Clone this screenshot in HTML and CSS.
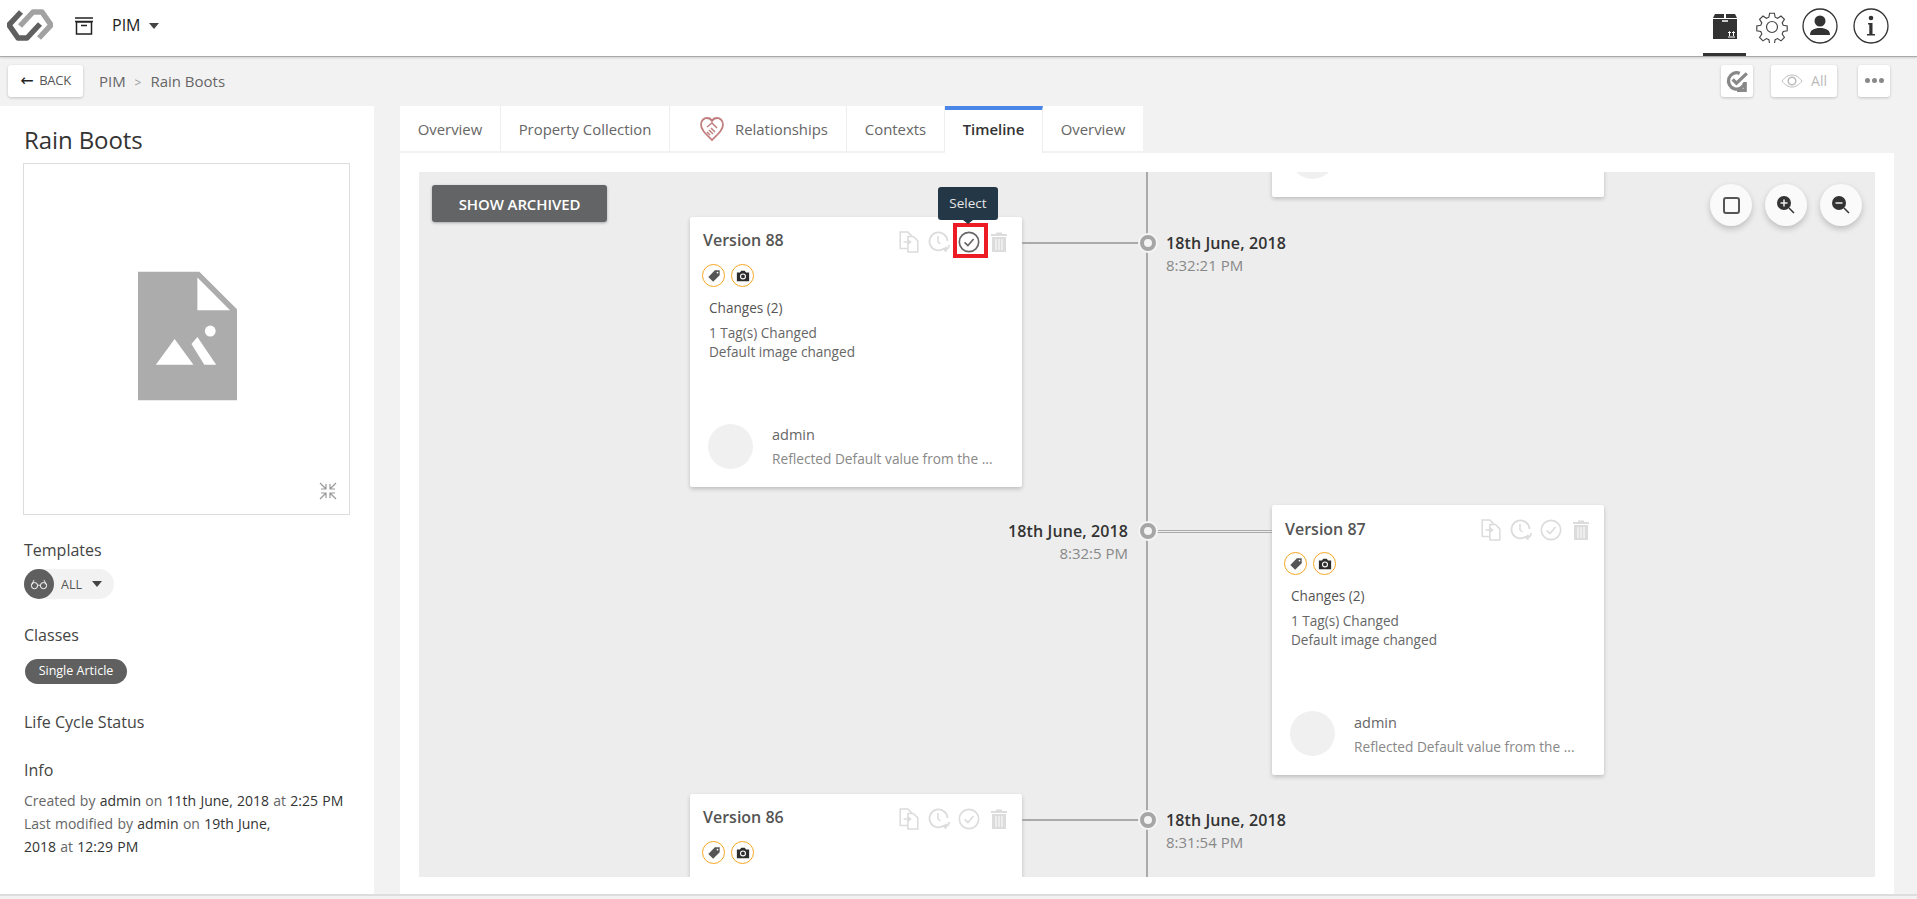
FILE: index.html
```html
<!DOCTYPE html>
<html lang="en">
<head>
  <meta charset="UTF-8" />
  <title>PIM - Rain Boots</title>
  <link rel="stylesheet" href="styles.css">
</head>
<body>

  <!-- shared icons -->
  <svg class="sprite" width="0" height="0">
    <symbol id="i-copy" viewBox="0 0 20 20">
      <path d="M2 1h7l3 3v2h-2v10H2z" fill="none" stroke="currentColor" stroke-width="1.4"/>
      <path d="M9 5h5l4 4v10H9z" fill="#fff" stroke="currentColor" stroke-width="1.4"/>
      <path d="M5 10h6M9 8l2.500 2L9 12" fill="none" stroke="currentColor" stroke-width="1.300"/>
    </symbol>
    <symbol id="i-clock" viewBox="0 0 22 22">
      <path d="M16 17.500A9 9 0 1 1 19.500 10" fill="none" stroke="currentColor" stroke-width="1.800"/>
      <path d="M10 5v6l2.500 2" fill="none" stroke="currentColor" stroke-width="1.500"/>
      <path d="M21 14c0 3-2 4.500-4.500 4.500M18.500 16l-2.500 2.500 2.500 2" fill="none" stroke="currentColor" stroke-width="1.800"/>
    </symbol>
    <symbol id="i-check" viewBox="0 0 20 20">
      <circle cx="10" cy="10" r="8.800" fill="none" stroke="currentColor" stroke-width="1.500"/>
      <path d="M6 10.300l3 3 5.200-6" fill="none" stroke="currentColor" stroke-width="1.500"/>
    </symbol>
    <symbol id="i-trash" viewBox="0 0 16 20">
      <path d="M5 2V.5h6V2h5v2H0V2zM1 5h14v15H1z" fill="currentColor"/>
      <path d="M5 7v11M8 7v11M11 7v11" stroke="#fff" stroke-width="1"/>
    </symbol>
    <symbol id="i-tag" viewBox="0 0 16 16">
      <path d="M9 1.500h5.500V7L7 14.500 1.500 9z" fill="#555"/>
      <circle cx="12" cy="4" r="1" fill="#fff"/>
    </symbol>
    <symbol id="i-camera" viewBox="0 0 16 16">
      <path d="M1 4h3.500L6 2h4l1.500 2H15v10H1z" fill="#2d2d2d"/>
      <circle cx="8" cy="8.500" r="2.800" fill="none" stroke="#fff" stroke-width="1.300"/>
    </symbol>
  </svg>

  <header class="topbar">
    <div class="topbar-left">
      <svg class="logo" viewBox="0 0 46 32" width="46" height="32">
        <path d="M13 17L26 3h9l9 13-12 13" fill="none" stroke="#a2a2a2" stroke-width="5.500" stroke-linejoin="round"/>
        <path d="M14 3L2 16l9 13h9l13-14" fill="none" stroke="#5f5f5f" stroke-width="5.500" stroke-linejoin="round"/>
      </svg>
      <svg class="archive" viewBox="0 0 18 18" width="18" height="18">
        <path d="M0 1h18M1.500 5h15v12h-15zM0 4.500h18M6 8.500h6" fill="none" stroke="#222" stroke-width="1.500"/>
      </svg>
      <span class="app-name">PIM</span>
      <span class="caret"></span>
    </div>
    <div class="topbar-right">
      <div class="top-tab">
        <svg viewBox="0 0 26 28" width="26" height="28">
          <path d="M1 6l2-4h9v4zM14 2h9l2 4H14z" fill="#333"/>
          <path d="M1 7h24v20H1z" fill="#333"/>
          <path d="M10 9h6" stroke="#fff" stroke-width="1.500"/>
          <path d="M16 25h7M17.500 24v-4M21.500 24v-4M16 21l1.500-1.500L19 21M20 21l1.500-1.500L23 21" fill="none" stroke="#fff" stroke-width="1"/>
        </svg>
      </div>
      <svg class="top-icon" viewBox="0 0 32 32" width="32" height="32">
        <path d="M13.500 1.500h5l.8 4.200 2.600 1.100 3.600-2.400 3.600 3.600-2.400 3.600 1.100 2.600 4.200.8v5l-4.200.8-1.100 2.600 2.400 3.600-3.600 3.600-3.600-2.400-2.600 1.100-.8 4.200h-5l-.8-4.200-2.600-1.100-3.600 2.400-3.600-3.600 2.400-3.600-1.100-2.600-4.200-.8v-5l4.200-.8 1.100-2.600-2.400-3.600 3.600-3.600 3.600 2.400 2.600-1.100z" transform="translate(.8 .8) scale(.95)" fill="none" stroke="#444" stroke-width="1.200"/>
        <circle cx="16" cy="16" r="5.500" fill="none" stroke="#444" stroke-width="1.200"/>
      </svg>
      <svg class="top-icon" viewBox="0 0 36 36" width="36" height="36">
        <circle cx="18" cy="18" r="17" fill="none" stroke="#333" stroke-width="1.300"/>
        <circle cx="18" cy="13" r="5.500" fill="#333"/>
        <path d="M8 27c0-5 4-7 10-7s10 2 10 7z" fill="#333"/>
      </svg>
      <svg class="top-icon" viewBox="0 0 36 36" width="36" height="36">
        <circle cx="18" cy="18" r="17" fill="none" stroke="#333" stroke-width="1.300"/>
        <circle cx="18" cy="10" r="2.300" fill="#333"/>
        <path d="M15 15h4.500v11H22v1.500h-8V26h2.300v-9.500H15z" fill="#333"/>
      </svg>
    </div>
  </header>

  <div class="subbar">
    <button class="back-btn" type="button"><span class="back-arrow">&#8592;</span>BACK</button>
    <div class="breadcrumb">PIM <span class="crumb-sep">&gt;</span> Rain Boots</div>
    <div class="subbar-right">
      <div class="tool-btn">
        <svg viewBox="0 0 22 22" width="24" height="24">
          <path d="M18 12.500A7.500 7.500 0 1 1 13.500 4" fill="none" stroke="#888" stroke-width="3"/>
          <path d="M7 9.500l3.500 3.500L20 4" fill="none" stroke="#888" stroke-width="3"/>
          <path d="M18.500 12v7.500H11" fill="none" stroke="#888" stroke-width="3"/>
        </svg>
      </div>
      <div class="tool-btn all-btn">
        <svg viewBox="0 0 22 14" width="22" height="14">
          <path d="M1 7c3-4 6.500-6 10-6s7 2 10 6c-3 4-6.500 6-10 6S4 11 1 7z" fill="none" stroke="#bbb" stroke-width="1"/>
          <circle cx="11" cy="7" r="3.800" fill="none" stroke="#bbb" stroke-width="1.500"/>
        </svg>
        <span>All</span>
      </div>
      <div class="tool-btn more-btn"><i></i><i></i><i></i></div>
    </div>
  </div>

  <main class="layout">
    <aside class="sidebar">
      <h1 class="item-title">Rain Boots</h1>
      <div class="image-box">
        <svg class="no-image" viewBox="0 0 100 130" width="99" height="130">
          <path d="M0 0h62l38 38v92H0z" fill="#acacac"/>
          <path d="M60 6v33h33z" fill="#fff"/>
          <circle cx="73" cy="60" r="5.500" fill="#fff"/>
          <path d="M18 94l19-26 19 26zM54 73l6-7 19 28H67z" fill="#fff"/>
        </svg>
        <svg class="shrink" viewBox="0 0 18 18" width="18" height="18">
          <path d="M1 1l6 6M7 2v5H2M17 1l-6 6M11 2v5h5M1 17l6-6M7 16v-5H2M17 17l-6-6M11 16v-5h5" fill="none" stroke="#999" stroke-width="1.200"/>
        </svg>
      </div>

      <h3 class="side-label templates-label">Templates</h3>
      <div class="template-pill">
        <span class="glasses">
          <svg viewBox="0 0 22 14" width="22" height="14">
            <circle cx="5.500" cy="9" r="3.800" fill="none" stroke="#fff" stroke-width="1.200"/>
            <circle cx="16.500" cy="9" r="3.800" fill="none" stroke="#fff" stroke-width="1.200"/>
            <path d="M9 8.500h4M2 8l3-6M20 8l-3-6" fill="none" stroke="#fff" stroke-width="1"/>
          </svg>
        </span>
        <span class="pill-text">ALL</span>
        <span class="caret small"></span>
      </div>

      <h3 class="side-label classes-label">Classes</h3>
      <span class="class-chip">Single Article</span>

      <h3 class="side-label life-label">Life Cycle Status</h3>

      <h3 class="side-label info-label">Info</h3>
      <p class="info-text">
        Created by <b>admin</b> on <b>11th June, 2018</b> at <b>2:25 PM</b><br>
        Last modified by <b>admin</b> on <b>19th June,</b><br>
        <b>2018</b> at <b>12:29 PM</b>
      </p>
    </aside>

    <section class="content">
      <nav class="tabs">
        <a class="tab tab-overview">Overview</a>
        <a class="tab tab-property">Property Collection</a>
        <a class="tab tab-rel">
          <svg viewBox="0 0 24 24" width="24" height="24">
            <path d="M12 23C6 17 1 13 1 7.500 1 3.500 4 1 7 1c2 0 4 1 5 3 1-2 3-3 5-3 3 0 6 2.500 6 6.500C23 13 18 17 12 23z" fill="none" stroke="#c07f7f" stroke-width="1.800"/>
            <path d="M7 10l5-4 5 5M9 13l4 4M11 11l4 4M7 15l3 3" fill="none" stroke="#c07f7f" stroke-width="1.500"/>
          </svg>
          Relationships
        </a>
        <a class="tab tab-contexts">Contexts</a>
        <a class="tab tab-timeline active">Timeline</a>
        <a class="tab tab-overview2">Overview</a>
      </nav>

      <div class="canvas">
        <div class="spine"></div>

        <button class="archived-btn" type="button">SHOW ARCHIVED</button>

        <div class="zoom-tools">
          <div class="round-btn"><span class="square-ico"></span></div>
          <div class="round-btn">
            <svg viewBox="0 0 20 20" width="20" height="20">
              <circle cx="8" cy="8" r="7" fill="#333"/>
              <path d="M8 4.500v7M4.500 8h7" stroke="#eee" stroke-width="1.500"/>
              <path d="M13 13l5 5" stroke="#333" stroke-width="1.500"/>
            </svg>
          </div>
          <div class="round-btn">
            <svg viewBox="0 0 20 20" width="20" height="20">
              <circle cx="8" cy="8" r="7" fill="#333"/>
              <path d="M4.500 8h7" stroke="#eee" stroke-width="1.500"/>
              <path d="M13 13l5 5" stroke="#333" stroke-width="1.500"/>
            </svg>
          </div>
        </div>

        <!-- card scrolled off the top -->
        <article class="card card-right card-stub">
          <div class="card-user"><span class="avatar"></span></div>
        </article>

        <article class="card card-left card-88">
          <div class="card-head">
            <h4>Version 88</h4>
            <div class="card-icons">
              <svg class="act"><use href="#i-copy"/></svg>
              <svg class="act"><use href="#i-clock"/></svg>
              <span class="act-selected">
                <svg class="act on"><use href="#i-check"/></svg>
                <span class="tooltip">Select</span>
              </span>
              <svg class="act act-trash"><use href="#i-trash"/></svg>
            </div>
          </div>
          <div class="badges">
            <span class="badge"><svg><use href="#i-tag"/></svg></span>
            <span class="badge"><svg><use href="#i-camera"/></svg></span>
          </div>
          <div class="changes">
            <div class="changes-title">Changes (2)</div>
            <div>1 Tag(s) Changed</div>
            <div>Default image changed</div>
          </div>
          <div class="card-user">
            <span class="avatar"></span>
            <div class="user-text">
              <div class="user-name">admin</div>
              <div class="user-note">Reflected Default value from the ...</div>
            </div>
          </div>
        </article>

        <article class="card card-right card-87">
          <div class="card-head">
            <h4>Version 87</h4>
            <div class="card-icons">
              <svg class="act"><use href="#i-copy"/></svg>
              <svg class="act"><use href="#i-clock"/></svg>
              <svg class="act"><use href="#i-check"/></svg>
              <svg class="act act-trash"><use href="#i-trash"/></svg>
            </div>
          </div>
          <div class="badges">
            <span class="badge"><svg><use href="#i-tag"/></svg></span>
            <span class="badge"><svg><use href="#i-camera"/></svg></span>
          </div>
          <div class="changes">
            <div class="changes-title">Changes (2)</div>
            <div>1 Tag(s) Changed</div>
            <div>Default image changed</div>
          </div>
          <div class="card-user">
            <span class="avatar"></span>
            <div class="user-text">
              <div class="user-name">admin</div>
              <div class="user-note">Reflected Default value from the ...</div>
            </div>
          </div>
        </article>

        <article class="card card-left card-86">
          <div class="card-head">
            <h4>Version 86</h4>
            <div class="card-icons">
              <svg class="act"><use href="#i-copy"/></svg>
              <svg class="act"><use href="#i-clock"/></svg>
              <svg class="act"><use href="#i-check"/></svg>
              <svg class="act act-trash"><use href="#i-trash"/></svg>
            </div>
          </div>
          <div class="badges">
            <span class="badge"><svg><use href="#i-tag"/></svg></span>
            <span class="badge"><svg><use href="#i-camera"/></svg></span>
          </div>
        </article>

        <div class="link link-left row-88"></div>
        <div class="link link-double row-87"></div>
        <div class="link link-left row-86"></div>

        <span class="node row-88"></span>
        <span class="node row-87"></span>
        <span class="node row-86"></span>

        <div class="stamp stamp-right stamp-88">
          <div class="stamp-date">18th June, 2018</div>
          <div class="stamp-time">8:32:21 PM</div>
        </div>
        <div class="stamp stamp-left stamp-87">
          <div class="stamp-date">18th June, 2018</div>
          <div class="stamp-time">8:32:5 PM</div>
        </div>
        <div class="stamp stamp-right stamp-86">
          <div class="stamp-date">18th June, 2018</div>
          <div class="stamp-time">8:31:54 PM</div>
        </div>
      </div>
    </section>
  </main>

</body>
</html>
```

FILE: styles.css
```css
* {
  box-sizing: border-box;
}
html, body {
  margin: 0;
  height: 899px;
  overflow: hidden;
}
body {
  font-family: "Open Sans", sans-serif;
  background: #f2f2f2;
  color: #555;
}
.sprite {
  position: absolute;
}

/* top bar */
.topbar {
  height: 57px;
  background: #fff;
  border-bottom: 1px solid #a9a9a9;
  display: flex;
  justify-content: space-between;
  box-shadow: 0 1px 2px rgba(0,0,0,0.15);
  position: relative;
}
.topbar-left {
  display: flex;
  align-items: center;
  padding-left: 7px;
}
.logo {
  margin-top: -6px;
}
.archive {
  margin-left: 22px;
  margin-top: -5px;
}
.app-name {
  margin-left: 19px;
  font-size: 16px;
  color: #222;
  margin-top: -6px;
}
.caret {
  width: 0;
  height: 0;
  border-left: 5px solid transparent;
  border-right: 5px solid transparent;
  border-top: 6px solid #444;
  margin-left: 9px;
  margin-top: -5px;
}
.topbar-right {
  display: flex;
  align-items: flex-start;
  padding-right: 28px;
}
.top-tab {
  width: 43px;
  height: 56px;
  border-bottom: 3px solid #333;
  display: flex;
  justify-content: center;
  padding-top: 12px;
}
.top-icon {
  margin-left: 15px;
  margin-top: 8px;
}
.top-icon:nth-child(2) {
  margin-left: 10px;
  margin-top: 11px;
}
.top-icon:nth-child(3) {
  margin-left: 14px;
}

/* breadcrumb row */
.subbar {
  height: 49px;
  display: flex;
  align-items: center;
  padding: 0 27px 2px 8px;
}
.back-btn {
  width: 75px;
  height: 32px;
  background: #fff;
  border: 0;
  border-radius: 3px;
  box-shadow: 0 1px 3px rgba(0,0,0,0.2);
  font-family: inherit;
  font-size: 13px;
  color: #555;
  padding: 0;
  letter-spacing: -0.3px;
}
.back-arrow {
  font-size: 16px;
  color: #222;
  font-family: "DejaVu Sans", sans-serif;
  vertical-align: -1px;
  margin-right: 6px;
}
.breadcrumb {
  margin-left: 16px;
  font-size: 15px;
  color: #666;
}
.crumb-sep {
  color: #999;
  font-size: 12px;
  margin: 0 5px;
}
.subbar-right {
  margin-left: auto;
  display: flex;
  gap: 18px;
}
.tool-btn {
  width: 32px;
  height: 32px;
  background: #fff;
  border-radius: 3px;
  box-shadow: 0 1px 3px rgba(0,0,0,0.2);
  display: flex;
  align-items: center;
  justify-content: center;
}
.all-btn {
  width: 66px;
  gap: 8px;
  font-size: 14px;
  color: #bbb;
  margin-right: 3px;
}
.more-btn {
  gap: 2px;
}
.more-btn i {
  width: 5px;
  height: 5px;
  border-radius: 50%;
  background: #888;
}

/* main columns */
.layout {
  display: flex;
  gap: 26px;
  height: 790px;
  border-bottom: 2px solid #ddd;
}
.sidebar {
  width: 374px;
  background: #fff;
  padding: 18px 0 0 24px;
}
.item-title {
  margin: 0;
  font-size: 24px;
  font-weight: 400;
  line-height: 32px;
  color: #333;
  letter-spacing: -0.1px;
}
.image-box {
  width: 327px;
  height: 352px;
  margin: 7px 0 0 -1px;
  border: 1px solid #ddd;
  position: relative;
  display: flex;
  justify-content: center;
  padding-top: 107px;
}
.no-image {
  margin-left: 2px;
}
.shrink {
  position: absolute;
  right: 12px;
  bottom: 14px;
}
.side-label {
  margin: 0;
  font-size: 16px;
  font-weight: 400;
  line-height: 22px;
  color: #444;
}
.templates-label {
  margin-top: 24px;
}
.template-pill {
  width: 90px;
  height: 30px;
  margin-top: 8px;
  background: #f2f2f2;
  border-radius: 15px;
  display: flex;
  align-items: center;
}
.glasses {
  width: 30px;
  height: 30px;
  border-radius: 50%;
  background: #5f5f5f;
  display: flex;
  align-items: center;
  justify-content: center;
}
.glasses svg {
  width: 18px;
  height: 12px;
}
.pill-text {
  font-size: 12.500px;
  margin-left: 7px;
  color: #555;
}
.caret.small {
  margin-left: 10px;
  margin-top: 0;
}
.classes-label {
  margin-top: 25px;
}
.class-chip {
  display: inline-block;
  margin: 13px 0 0 1px;
  width: 102px;
  height: 25px;
  background: #606060;
  border-radius: 13px;
  color: #fff;
  font-size: 12.500px;
  line-height: 24px;
  text-align: center;
}
.life-label {
  margin-top: 27px;
}
.info-label {
  margin-top: 26px;
}
.info-text {
  margin: 9px 0 0;
  font-size: 14px;
  line-height: 22.800px;
  color: #666;
  word-spacing: 0.6px;
}
.info-text b {
  font-weight: 400;
  color: #333;
}

/* tabs */
.content {
  width: 1494px;
  background: #fff;
}
.tabs {
  display: flex;
  height: 47px;
  background: #fff;
  border-bottom: 2px solid #f2f2f2;
  position: relative;
}
.tabs::after {
  content: "";
  flex: 1;
  background: #f2f2f2;
  margin-bottom: -2px;
}
.tab {
  height: 46px;
  display: flex;
  align-items: center;
  justify-content: center;
  font-size: 14.900px;
  color: #666;
  border-right: 1px solid #eee;
}
.tab-overview {
  width: 101px;
}
.tab-overview2 {
  width: 100px;
  border-right: 0;
}
.tab-property {
  width: 169px;
}
.tab-rel {
  width: 177px;
  gap: 11px;
  padding-left: 12px;
}
.tab-contexts {
  width: 98px;
}
.tab-timeline {
  width: 98px;
}
.tab.active {
  height: 47px;
  font-weight: 600;
  color: #333;
  border-top: 4px solid #4a86e8;
  padding-bottom: 5px;
  background: #fff;
  position: relative;
  z-index: 1;
}

/* timeline canvas */
.canvas {
  position: relative;
  width: 1456px;
  height: 705px;
  margin: 19px 0 0 19px;
  background: #ededed;
  overflow: hidden;
}
.spine {
  position: absolute;
  left: 727px;
  top: 0;
  bottom: 0;
  width: 2px;
  background: #aaa;
}
.archived-btn {
  position: absolute;
  left: 13px;
  top: 13px;
  width: 175px;
  height: 37px;
  background: #636466;
  color: #fff;
  border: 0;
  border-radius: 3px;
  box-shadow: 0 1px 3px rgba(0,0,0,0.3);
  font-family: inherit;
  font-size: 15px;
  font-weight: 600;
  letter-spacing: -0.1px;
}
.zoom-tools {
  position: absolute;
  right: 13px;
  top: 12px;
  display: flex;
  gap: 13px;
}
.round-btn {
  width: 42px;
  height: 42px;
  border-radius: 50%;
  background: #fafafa;
  box-shadow: 0 3px 6px rgba(0,0,0,0.2);
  display: flex;
  align-items: center;
  justify-content: center;
}
.square-ico {
  width: 17px;
  height: 17px;
  border: 2px solid #555;
  border-radius: 3px;
}

/* version cards */
.card {
  position: absolute;
  width: 332px;
  height: 270px;
  background: #fff;
  border-radius: 2px;
  box-shadow: 0 2px 4px rgba(0,0,0,0.2);
  padding: 0 12px 0 13px;
  display: flex;
  flex-direction: column;
}
.card-left {
  left: 271px;
}
.card-right {
  left: 853px;
}
.card-stub {
  top: -245px;
}
.card-88 {
  top: 45px;
}
.card-87 {
  top: 333px;
}
.card-86 {
  top: 622px;
}
.card-head {
  height: 48px;
  display: flex;
  align-items: center;
  justify-content: space-between;
}
.card-head h4 {
  margin: -3px 0 0;
  font-size: 16px;
  font-weight: 600;
  color: #555;
}
.card-87 .card-head h4 {
  margin-top: -1px;
}
.card-icons {
  display: flex;
  align-items: center;
  gap: 8px;
  color: #dcdcdc;
  margin-top: 2px;
}
.act {
  width: 22px;
  height: 22px;
  display: block;
}
.act-trash {
  width: 16px;
  margin: 0 3px;
}
.act-selected {
  position: relative;
  display: block;
}
.act-selected::before {
  content: "";
  position: absolute;
  left: -5px;
  right: -8px;
  top: -8px;
  bottom: -5px;
  border: 4px solid #ed1c24;
}
.act.on {
  color: #666;
  position: relative;
}
.tooltip {
  position: absolute;
  left: -20px;
  top: -44px;
  width: 60px;
  height: 33px;
  background: #243746;
  border-radius: 3px;
  color: #e6e6e6;
  font-size: 13.500px;
  line-height: 33px;
  text-align: center;
}
.tooltip::after {
  content: "";
  position: absolute;
  left: 25px;
  top: 33px;
  border-left: 5px solid transparent;
  border-right: 5px solid transparent;
  border-top: 4px solid #243746;
}
.badges {
  display: flex;
  gap: 6px;
  margin: -1px 0 0 -1px;
}
.badge {
  width: 23px;
  height: 23px;
  border-radius: 50%;
  border: 1px solid #f5a623;
  display: flex;
  align-items: center;
  justify-content: center;
}
.badge svg {
  width: 14px;
  height: 14px;
}
.changes {
  margin: 11px 0 0 3px;
  padding-left: 3px;
  font-size: 13.600px;
  line-height: 19px;
  color: #666;
}
.changes-title {
  font-size: 13.600px;
  color: #555;
  margin-bottom: 6px;
}
.card-user {
  margin-top: auto;
  margin-bottom: 18px;
  padding-left: 5px;
  display: flex;
  gap: 19px;
}
.avatar {
  width: 45px;
  height: 45px;
  border-radius: 50%;
  background: #f0f0f0;
  flex: none;
}
.user-text {
  padding-top: 1px;
}
.card-87 .user-text {
  padding-top: 2px;
}
.user-name {
  font-size: 14.500px;
  line-height: 20px;
  color: #666;
}
.user-note {
  font-size: 13.700px;
  line-height: 20px;
  color: #888;
  margin-top: 4px;
}

/* connectors */
.link {
  position: absolute;
  height: 2px;
  background: #aaa;
}
.link-left {
  left: 603px;
  width: 125px;
}
.link-double {
  left: 728px;
  width: 125px;
  height: 3px;
  background: none;
  border-top: 1px solid #aaa;
  border-bottom: 1px solid #aaa;
}
.row-88 {
  top: 70px;
}
.row-87 {
  top: 358px;
}
.row-86 {
  top: 647px;
}
.node {
  position: absolute;
  left: 721px;
  width: 16px;
  height: 16px;
  margin-top: -7px;
  border-radius: 50%;
  background: #f4f4f4;
  border: 4px solid #a6a6a6;
  box-shadow: 0 0 0 2px #f4f4f4;
}
.stamp {
  position: absolute;
}
.stamp-right {
  left: 747px;
}
.stamp-left {
  right: 747px;
  text-align: right;
}
.stamp-88 {
  top: 59px;
}
.stamp-87 {
  top: 347px;
}
.stamp-86 {
  top: 636px;
}
.stamp-date {
  font-size: 16px;
  font-weight: 600;
  line-height: 24px;
  color: #333;
  letter-spacing: 0.1px;
}
.stamp-time {
  font-size: 15px;
  line-height: 20px;
  color: #888;
}
```
